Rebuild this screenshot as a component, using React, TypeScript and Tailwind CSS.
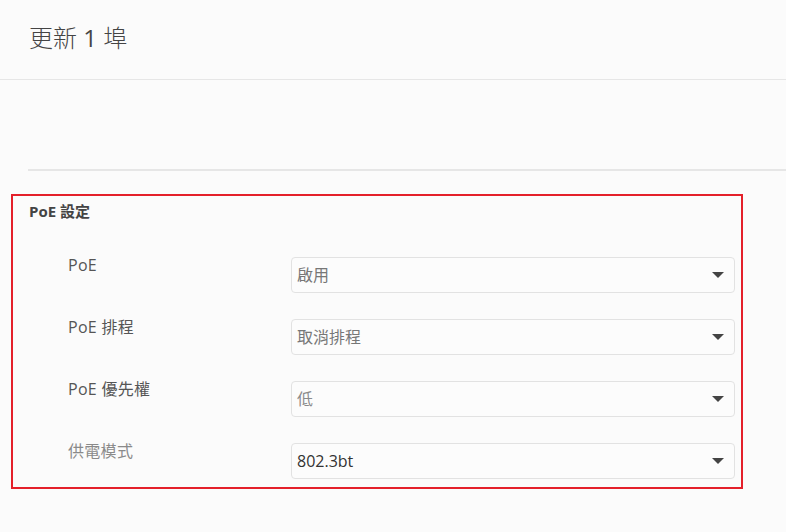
import React from 'react';

type Row = {
  label: string;
  value: string;
  labelTone: string;
  valueTone: string;
};

const rows: Row[] = [
  { label: 'PoE', value: '啟用', labelTone: 'text-[#555555]', valueTone: 'text-[#777777]' },
  { label: 'PoE 排程', value: '取消排程', labelTone: 'text-[#555555]', valueTone: 'text-[#777777]' },
  { label: 'PoE 優先權', value: '低', labelTone: 'text-[#555555]', valueTone: 'text-[#8a8a8a]' },
  { label: '供電模式', value: '802.3bt', labelTone: 'text-[#8a8a8a]', valueTone: 'text-[#333333]' },
];

function Caret() {
  return (
    <svg width="12" height="6" viewBox="0 0 12 6" aria-hidden="true">
      <path d="M0 0h12L6 6z" fill="#444444" />
    </svg>
  );
}

function SelectBox({ value, tone }: { value: string; tone: string }) {
  return (
    <div className="flex h-[36px] flex-1 items-center justify-between rounded-[4px] border border-[#e2e2e2] bg-[#fcfcfc] pl-[5px] pr-[10px]">
      <span className={`text-[16px] leading-[20px] ${tone}`}>{value}</span>
      <Caret />
    </div>
  );
}

export default function App() {
  return (
    <div
      className="min-h-[532px] w-full bg-[#fbfbfb]"
      style={{ fontFamily: '"Open Sans", "Noto Sans CJK TC", sans-serif' }}
    >
      {/* Header */}
      <div className="h-[80px] border-b border-[#e6e6e6] pl-[29px] pt-[22px]">
        <h1 className="text-[24px] font-light leading-[32px] text-[#444444]">
          更新 <span className="font-medium">1</span> 埠
        </h1>
      </div>

      <div className="h-[89px]" />
      <div className="ml-[28px] h-[2px] bg-[#e6e6e6]" />

      {/* PoE settings */}
      <div className="ml-[11px] mt-[23px] w-[732px] border-2 border-[#e4202a] pb-[8px] pl-[16px] pr-[6px] pt-[6px]">
        <div className="text-[15px] font-bold leading-[18px] text-[#444444]">PoE 設定</div>
        <div className="mt-[37px] flex flex-col gap-[26px]">
          {rows.map((r) => (
            <div key={r.label} className="flex items-start">
              <div className={`w-[262px] shrink-0 pl-[39px] text-[16px] leading-[16px] tracking-[0.3px] ${r.labelTone}`}>
                {r.label}
              </div>
              <SelectBox value={r.value} tone={r.valueTone} />
            </div>
          ))}
        </div>
      </div>
    </div>
  );
}
